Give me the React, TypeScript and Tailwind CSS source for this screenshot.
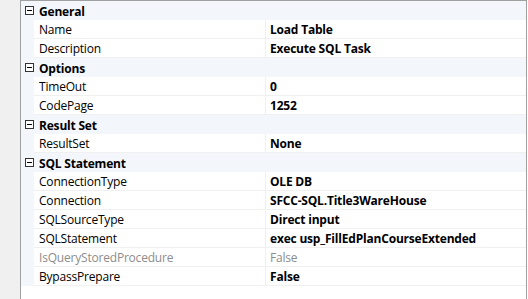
import React from "react";

type Row =
  | { kind: "cat"; label: string }
  | { kind: "prop"; name: string; value: string; disabled?: boolean };

const rows: Row[] = [
  { kind: "cat", label: "General" },
  { kind: "prop", name: "Name", value: "Load Table" },
  { kind: "prop", name: "Description", value: "Execute SQL Task" },
  { kind: "cat", label: "Options" },
  { kind: "prop", name: "TimeOut", value: "0" },
  { kind: "prop", name: "CodePage", value: "1252" },
  { kind: "cat", label: "Result Set" },
  { kind: "prop", name: "ResultSet", value: "None" },
  { kind: "cat", label: "SQL Statement" },
  { kind: "prop", name: "ConnectionType", value: "OLE DB" },
  { kind: "prop", name: "Connection", value: "SFCC-SQL.Title3WareHouse" },
  { kind: "prop", name: "SQLSourceType", value: "Direct input" },
  { kind: "prop", name: "SQLStatement", value: "exec usp_FillEdPlanCourseExtended" },
  { kind: "prop", name: "IsQueryStoredProcedure", value: "False", disabled: true },
  { kind: "prop", name: "BypassPrepare", value: "False" },
];

function MinusBox() {
  return (
    <svg width="9" height="9" viewBox="0 0 9 9" className="block">
      <rect x="0.5" y="0.5" width="8" height="8" fill="white" stroke="#333" />
      <line x1="2" y1="4.5" x2="7" y2="4.5" stroke="#000" />
    </svg>
  );
}

export default function App() {
  return (
    <div
      className="w-[528px] h-[299px] bg-white flex text-[12px] text-black overflow-hidden"
      style={{ fontFamily: '"Open Sans", "Noto Sans", sans-serif' }}
    >
      <div className="w-[20px] h-full bg-[#f0f0f0] shrink-0" />
      <div className="w-[507px] h-full border-l border-t border-r border-[#a0a0a0] flex flex-col shrink-0">
        {rows.map((r, i) =>
          r.kind === "cat" ? (
            <div key={i} className="h-[19px] shrink-0 flex items-center bg-[#f3f6fb] leading-none">
              <div className="w-[13px] flex justify-end pl-[2px]">
                <MinusBox />
              </div>
              <span className="pl-[5px] pt-[2px] font-bold tracking-[-0.2px]">{r.label}</span>
            </div>
          ) : (
            <div key={i} className="h-[19px] shrink-0 flex leading-none">
              <div className="w-[13px] bg-[#f3f6fb]" />
              <div className="w-[231px] border-b border-[#f0f0f0] flex items-center pl-[5px] pt-[2px] tracking-[-0.2px]">
                <span className={r.disabled ? "text-[#8d8d8d]" : ""}>{r.name}</span>
              </div>
              <div
                className={
                  "flex-1 border-l border-b border-[#f0f0f0] flex items-center pl-[4px] pt-[2px] tracking-[-0.2px] " +
                  (r.disabled ? "text-[#8d8d8d]" : "font-bold")
                }
              >
                {r.value}
              </div>
            </div>
          )
        )}
      </div>
    </div>
  );
}
